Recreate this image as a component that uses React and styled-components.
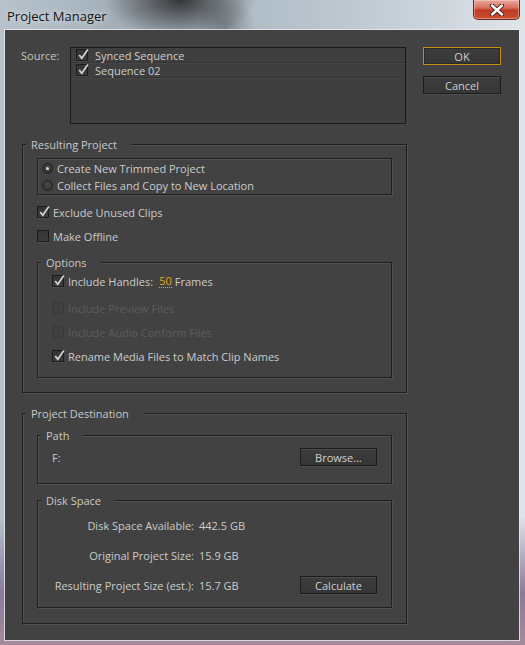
import styled, { createGlobalStyle } from "styled-components";

const GlobalStyle = createGlobalStyle`
  html, body { margin: 0; padding: 0; }
  body {
    width: 525px;
    height: 645px;
    overflow: hidden;
    font-family: "Open Sans", "Noto Sans", sans-serif;
    font-size: 11px;
  }
  * { box-sizing: border-box; }
`;

const Window = styled.div`
  width: 525px;
  height: 645px;
  display: flex;
  flex-direction: column;
  background:
    radial-gradient(ellipse 75px 40px at 180px 0px, rgba(40,40,42,0.9), rgba(70,72,74,0.5) 60%, rgba(0,0,0,0) 100%),
    radial-gradient(ellipse 30px 30px at 225px 26px, rgba(70,72,74,0.45), rgba(0,0,0,0) 100%),
    linear-gradient(180deg, rgba(0,0,0,0) 80%, #8a7a9a 92%, #a68a9a 100%),
    linear-gradient(90deg, #b7c2cb 0%, #adbac4 12%, #a3afb8 22%, #aebbc5 45%, #bcc7d0 65%, #cfd7dd 85%, #e0e5e9 100%);
`;

const TitleBar = styled.div`
  height: 30px;
  display: flex;
  align-items: flex-start;
  justify-content: space-between;
`;

const Title = styled.div`
  font-family: "Open Sans", "Noto Sans", sans-serif;
  font-size: 13px;
  color: #151515;
  padding: 7px 0 0 7px;
  text-shadow: 0 0 6px rgba(255,255,255,0.8);
`;

const CloseButton = styled.div`
  width: 47px;
  height: 20px;
  margin-right: 5px;
  border: 1px solid #5e2b22;
  border-top: none;
  border-radius: 0 0 5px 5px;
  background: linear-gradient(180deg, #e9a99c 0%, #d8705f 40%, #c03a26 55%, #c9502f 100%);
  box-shadow: inset 0 0 0 1px rgba(255,220,210,0.45);
  display: flex;
  align-items: center;
  justify-content: center;
`;

const Client = styled.div`
  margin: 0 6px 0 5px;
  height: 610px;
  background: #424242;
  box-shadow: 0 0 0 1px rgba(235,240,245,0.75);
  display: flex;
  padding: 17px 0 0 16px;
`;

const LeftCol = styled.div`
  width: 385px;
  display: flex;
  flex-direction: column;
`;

const RightCol = styled.div`
  margin-left: 17px;
  display: flex;
  flex-direction: column;
  gap: 11px;
`;

const Button = styled.div`
  width: ${(p) => p.$w || 77}px;
  height: 18px;
  display: flex;
  align-items: center;
  justify-content: center;
  color: #cfcfcf;
  font-size: 11px;
  border: 1px solid ${(p) => (p.$default ? "#c98c12" : "#1c1c1c")};
  background: linear-gradient(180deg, #3d3d3d 0%, #363636 100%);
  box-shadow: ${(p) =>
    p.$default
      ? "inset 0 0 0 1px #2a2a2a"
      : "inset 0 1px 0 #4c4c4c, 0 1px 0 #4e4e4e"};
`;

const SourceRow = styled.div`
  display: flex;
  height: 77px;
`;

const Label = styled.div`
  color: #c4c4c4;
  width: 49px;
  padding-top: 1px;
`;

const List = styled.div`
  width: 336px;
  height: 77px;
  border: 1px solid #1b1b1b;
  background: #3f3f3f;
`;

const ListRow = styled.div`
  height: 15px;
  display: flex;
  align-items: center;
  gap: 7px;
  padding-left: 5px;
  color: #cdcdcd;
  border-bottom: 1px solid #363636;
  box-shadow: 0 1px 0 #474747;
`;

const Group = styled.div`
  margin: ${(p) => p.$top || 20}px 0 0 ${(p) => p.$left || 0}px;
  width: ${(p) => p.$w}px;
  height: ${(p) => p.$h}px;
  border: 1px solid #1f1f1f;
  box-shadow: 1px 1px 0 #515151, inset 1px 1px 0 #515151;
  padding: 0 14px;
  display: flex;
  flex-direction: column;
`;

const Legend = styled.div`
  align-self: flex-start;
  margin: -8px 0 0 -11px;
  padding: 0 14px 0 5px;
  height: 16px;
  line-height: 16px;
  background: #424242;
  color: #c8c8c8;
`;

const RadioBox = styled.div`
  margin-top: 5px;
  height: 37px;
  border: 1px solid #1f1f1f;
  box-shadow: 1px 1px 0 #515151, inset 1px 1px 0 #515151;
  padding: 0 0 0 4px;
  display: flex;
  flex-direction: column;
  justify-content: center;
`;

const Row = styled.div`
  height: ${(p) => p.$h || 17}px;
  margin-top: ${(p) => p.$mt || 0}px;
  display: flex;
  align-items: center;
  gap: ${(p) => p.$gap || 4}px;
  color: ${(p) => (p.$disabled ? "#5d5d5d" : "#cbcbcb")};
  white-space: nowrap;
`;

const Box = styled.div`
  width: 12px;
  height: 12px;
  flex: none;
  border: 1px solid ${(p) => (p.$disabled ? "#393939" : "#1c1c1c")};
  background: ${(p) =>
    p.$disabled ? "#404040" : "linear-gradient(180deg, #353535, #3c3c3c)"};
  box-shadow: ${(p) => (p.$disabled ? "none" : "0 1px 0 #4e4e4e")};
  position: relative;
  svg { position: absolute; left: 0; top: -2px; }
`;

const Radio = styled.div`
  width: 11px;
  height: 11px;
  flex: none;
  border-radius: 50%;
  border: 1px solid #202020;
  background: radial-gradient(circle at 50% 40%, #4a4a4a, #333 80%);
  display: flex;
  align-items: center;
  justify-content: center;
  &::after {
    content: "";
    width: 3px;
    height: 3px;
    border-radius: 50%;
    background: ${(p) => (p.$on ? "#d8d8d8" : "transparent")};
  }
`;

const Value = styled.span`
  color: #e8a317;
  border-bottom: 1px dotted #e8a317;
  line-height: 13px;
  margin: 0 -1px 0 2px;
`;

const PathRow = styled.div`
  display: flex;
  align-items: center;
  justify-content: space-between;
  margin-top: 4px;
  color: #cbcbcb;
`;

const StatGrid = styled.div`
  display: grid;
  grid-template-columns: 142px 60px 1fr;
  grid-auto-rows: 30px;
  column-gap: 5px;
  align-items: center;
  margin-top: 1px;
  color: #cbcbcb;
`;

const StatLabel = styled.div`
  text-align: right;
  white-space: nowrap;
`;

const StatValue = styled.div`
  white-space: nowrap;
`;

const ButtonCell = styled.div`
  justify-self: end;
`;

function Check() {
  return (
    <svg width="13" height="13" viewBox="0 0 13 13">
      <path d="M2.2 7 L4.8 10.3 L10.8 1.5" fill="none" stroke="#d4d4d4" strokeWidth="1.7" strokeLinejoin="miter" />
    </svg>
  );
}

function Checkbox({ checked, disabled, label }) {
  return (
    <>
      <Box $disabled={disabled}>{checked && <Check />}</Box>
      {label}
    </>
  );
}

export default function App() {
  return (
    <>
      <GlobalStyle />
      <Window>
        <TitleBar>
          <Title>Project Manager</Title>
          <CloseButton>
            <svg width="16" height="12" viewBox="0 0 16 12">
              <path d="M3 1.5 L13 10.5 M13 1.5 L3 10.5" stroke="#3a1a14" strokeWidth="4.2" strokeLinecap="round" />
              <path d="M3 1.5 L13 10.5 M13 1.5 L3 10.5" stroke="#ffffff" strokeWidth="2.4" strokeLinecap="round" />
            </svg>
          </CloseButton>
        </TitleBar>
        <Client>
          <LeftCol>
            <SourceRow>
              <Label>Source:</Label>
              <List>
                <ListRow>
                  <Checkbox checked label="Synced Sequence" />
                </ListRow>
                <ListRow>
                  <Checkbox checked label="Sequence 02" />
                </ListRow>
              </List>
            </SourceRow>

            <Group $w={385} $h={249} $left={1}>
              <Legend>Resulting Project</Legend>
              <RadioBox>
                <Row $h={17}>
                  <Radio $on />
                  Create New Trimmed Project
                </Row>
                <Row $h={17}>
                  <Radio />
                  Collect Files and Copy to New Location
                </Row>
              </RadioBox>
              <Row $h={16} $mt={9}>
                <Checkbox checked label="Exclude Unused Clips" />
              </Row>
              <Row $h={16} $mt={8}>
                <Checkbox label="Make Offline" />
              </Row>
              <Group $w={355} $h={116} $top={18}>
                <Legend>Options</Legend>
                <Row $h={16} $mt={2}>
                  <Checkbox checked label="Include Handles:" />
                  <Value>50</Value>
                  Frames
                </Row>
                <Row $h={16} $mt={11} $disabled>
                  <Checkbox disabled label="Include Preview Files" />
                </Row>
                <Row $h={16} $mt={8} $disabled>
                  <Checkbox disabled label="Include Audio Conform Files" />
                </Row>
                <Row $h={16} $mt={8}>
                  <Checkbox checked label="Rename Media Files to Match Clip Names" />
                </Row>
              </Group>
            </Group>

            <Group $w={385} $h={211} $left={1}>
              <Legend>Project Destination</Legend>
              <Group $w={355} $h={49} $top={13}>
                <Legend>Path</Legend>
                <PathRow>
                  <span>F:</span>
                  <Button>Browse...</Button>
                </PathRow>
              </Group>
              <Group $w={355} $h={108} $top={16}>
                <Legend>Disk Space</Legend>
                <StatGrid>
                  <StatLabel>Disk Space Available:</StatLabel>
                  <StatValue>442.5 GB</StatValue>
                  <span />
                  <StatLabel>Original Project Size:</StatLabel>
                  <StatValue>15.9 GB</StatValue>
                  <span />
                  <StatLabel>Resulting Project Size (est.):</StatLabel>
                  <StatValue>15.7 GB</StatValue>
                  <ButtonCell>
                    <Button>Calculate</Button>
                  </ButtonCell>
                </StatGrid>
              </Group>
            </Group>
          </LeftCol>
          <RightCol>
            <Button $w={78} $default>OK</Button>
            <Button $w={78}>Cancel</Button>
          </RightCol>
        </Client>
      </Window>
    </>
  );
}
